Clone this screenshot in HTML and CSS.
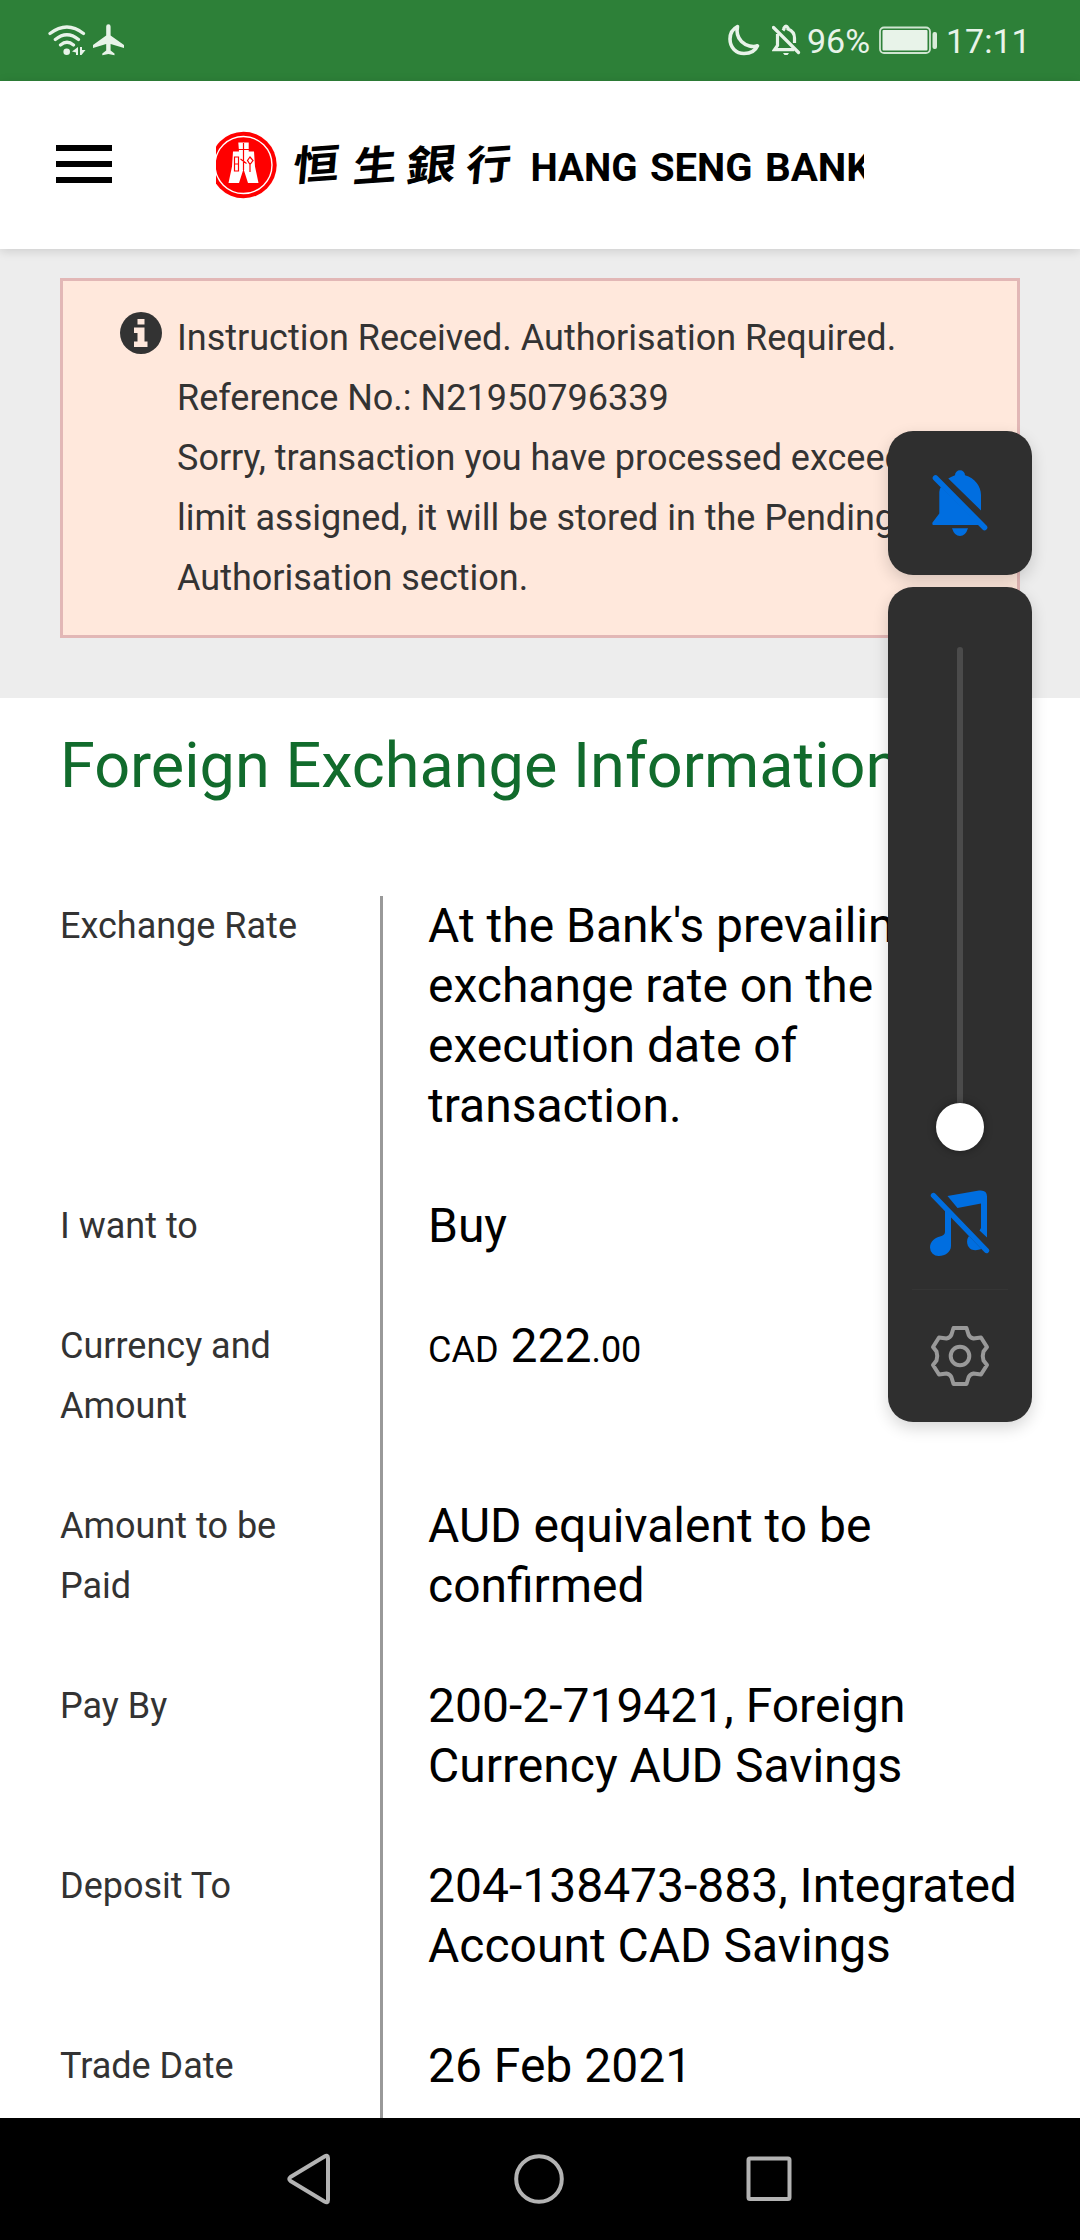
FILE: index.html
```
<!DOCTYPE html>
<html lang="en">
<head>
<meta charset="utf-8">
<title>Foreign Exchange Information</title>
<link rel="stylesheet" href="styles.css">
</head>
<body>
<div class="screen">
  <div class="status-bar">
    <div class="status-left">
      <svg width="38" height="32" viewBox="48 24 38 32" fill="none" stroke="#e8f3e9" stroke-linecap="round">
        <path d="M50 33.500Q67 20.500 83.500 33.500M55.300 39.500Q67 30 78.500 39.500M60.500 45Q67 39.500 73.500 45" stroke-width="3.200"/>
        <circle cx="66.700" cy="51.700" r="3.300" fill="#e8f3e9" stroke="none"/>
        <path d="M72 51.500L78 47V55H76V52.500ZM80 47V55L81.500 55L85.500 50H82V47Z" fill="#e8f3e9" stroke="none"/>
      </svg>
      <svg class="plane" width="32" height="32" viewBox="93 24 32 32" fill="#e8f3e9">
        <path d="M106.200 26.500a2.200 2.200 0 0 1 4.400 0V35.500L124 45V48L110.600 44V50.500L114.500 53.500V55.300L108.400 54L102.300 55.300V53.500L106.200 50.500V44L93 48V45L106.200 35.500Z"/>
      </svg>
    </div>
    <div class="status-right">
      <svg width="32" height="32" viewBox="728 24 32 32" fill="none" stroke="#e8f3e9" stroke-width="3.600" stroke-linejoin="round">
        <path d="M737.500 26.500C732.500 29 730 33.500 730 39C730 47.500 736 53.500 744 53.500C750.500 53.500 755.500 50.500 757.500 45.800C753 47.500 746 46 741.500 41.500C737.500 37.500 736.500 31.500 737.500 26.500Z"/>
      </svg>
      <svg class="mini-bell" width="29" height="32" viewBox="772 24 29 32" fill="none" stroke="#e8f3e9" stroke-width="3.200">
        <path d="M773.500 27.500L798.500 52.500" stroke-linecap="round"/>
        <path d="M777.500 34V45.500L774.500 49.700H794M783 30.500L784 29V28Q786 24 788 28V29Q794.500 31.500 794.500 38V43"/>
        <path d="M783 53H789L787.500 55H784.500Z" fill="#e8f3e9" stroke="none"/>
      </svg>
      <span class="percent">96%</span>
      <svg class="battery" width="58" height="28" viewBox="879 26 58 28" fill="none">
        <rect x="880" y="27.500" width="50" height="25.500" rx="4" stroke="#cfe5d1" stroke-width="1.800"/>
        <rect x="882.500" y="30" width="45" height="20.500" rx="1" fill="#e8f3e9"/>
        <rect x="932.500" y="32" width="4.500" height="17" rx="2" fill="#d9ebda"/>
      </svg>
      <span class="clock">17:11</span>
    </div>
  </div>

  <header class="app-header">
    <div class="menu"><i></i><i></i><i></i></div>
    <svg class="logo" width="648" height="88" viewBox="216 121 648 88">
      <circle cx="243.500" cy="165" r="33.200" fill="#f00"/>
      <circle cx="243.500" cy="165" r="28.500" fill="none" stroke="#fff" stroke-width="1.400"/>
      <path d="M238.300 142.500H248.700V151.500H254L255 166.500L258.500 183H248L243.500 169L239 183H228.500L232 166.500L233 151.500H239Z" fill="#fff"/>
      <path d="M238 149.500H249M243.500 143V170M240.500 159L246.500 163.500M234.500 157H238.500V171H234.500ZM234.500 164H238.500M250 157L253 160.500L250 164.500L247.500 160.500ZM250 164V172" fill="none" stroke="#f00" stroke-width="1.200"/>
      <g class="logo-cjk">
        <text transform="translate(292 181) skewY(-4) skewX(-5) scale(1.05 .93)">恒</text>
        <text transform="translate(352 182) skewY(-4) skewX(-5) scale(1 .93)">生</text>
        <text transform="translate(405 182) skewY(-4) skewX(-5) scale(1.13 .95)">銀</text>
        <text transform="translate(465 181) skewY(-4) skewX(-5) scale(1.03 .93)">行</text>
      </g>
      <g class="logo-latin">
        <text x="530.500" y="181" textLength="107" lengthAdjust="spacingAndGlyphs">HANG</text>
        <text x="650" y="181" textLength="102.500" lengthAdjust="spacingAndGlyphs">SENG</text>
        <text x="765" y="181" textLength="107" lengthAdjust="spacingAndGlyphs">BANK</text>
      </g>
    </svg>
  </header>

  <main class="content">
    <section class="notice-area">
      <div class="notice">
        <svg class="info" width="42" height="42" viewBox="0 0 42 42">
          <circle cx="21" cy="21" r="21" fill="#333"/>
          <path d="M17.500 7H24.500V12.500H17.500ZM14 15.500H24.500V29.500H27.500V35H14V29.500H17.500V21H14Z" fill="#ffe8dc"/>
        </svg>
        <p>Instruction Received. Authorisation Required.<br>Reference No.: N21950796339<br>Sorry, transaction you have processed exceeded<br>limit assigned, it will be stored in the Pending<br>Authorisation section.</p>
      </div>
    </section>
    <h1>Foreign Exchange Information</h1>
    <dl class="details">
      <dt>Exchange Rate</dt><dd>At the Bank's prevailing<br>exchange rate on the<br>execution date of<br>transaction.</dd>
      <dt>I want to</dt><dd>Buy</dd>
      <dt>Currency and<br>Amount</dt><dd><small>CAD</small> 222<small>.00</small></dd>
      <dt>Amount to be<br>Paid</dt><dd>AUD equivalent to be<br>confirmed</dd>
      <dt>Pay By</dt><dd>200-2-719421, Foreign<br>Currency AUD Savings</dd>
      <dt>Deposit To</dt><dd>204-138473-883, Integrated<br>Account CAD Savings</dd>
      <dt>Trade Date</dt><dd>26 Feb 2021</dd>
    </dl>
  </main>

  <nav class="nav-bar">
    <svg width="46" height="54" viewBox="286 2152 46 54"><path d="M324.500 2156.500Q328 2154.500 328 2158V2200Q328 2203.500 324.500 2201.500L290.500 2181Q288 2179 290.500 2177Z"/></svg>
    <svg width="50" height="54" viewBox="515 2152 50 54"><circle cx="540" cy="2179" r="22.800"/></svg>
    <svg width="48" height="54" viewBox="745 2152 48 54"><rect x="748.500" y="2158.500" width="41" height="40.500" rx="1.500"/></svg>
  </nav>

  <aside class="volume">
    <div class="panel ringer">
      <svg width="58" height="68" viewBox="931 469 58 68" fill="#006ee0">
        <path d="M948.300 478.500Q951.500 476.500 955 475.200A5 5 0 0 1 965 475.200C975 478 981 486.500 981 495V510.500Z"/>
        <path d="M941 487L979 525H933Q932 524.500 932.500 522.500L939.300 513.500V492Q939.300 489 941 487Z"/>
        <path d="M935.500 478L984.500 527.500" stroke="#006ee0" stroke-width="5.600" stroke-linecap="round"/>
        <path d="M952 528.200H968Q965.500 536 960 536T952 528.200Z"/>
      </svg>
    </div>
    <div class="panel slider">
      <div class="track"></div>
      <div class="thumb"></div>
      <svg class="music" width="60" height="68" viewBox="930 1189 60 68" fill="#006ee0">
        <path d="M947.500 1196L979 1190.500Q987 1189.500 987 1196.500V1237.500L979.500 1230.500L981 1228V1203.500L957.500 1208Z"/>
        <path d="M945 1208L951 1214V1246C951 1252 945 1256 939 1256A8.500 8.500 0 0 1 930 1247.500C930 1241 935.500 1237.500 940 1236.500Q945 1235 945 1232Z"/>
        <path d="M969 1236C965.500 1240 967 1247.500 971.500 1249.500Q976 1251 981.500 1249Z"/>
        <path d="M933.500 1195.500L986.500 1250.500" stroke="#006ee0" stroke-width="5.400" stroke-linecap="round"/>
      </svg>
      <div class="divider"></div>
      <svg width="60" height="62" viewBox="-30 -31 60 62" fill="none" stroke="#999" stroke-width="4" stroke-linejoin="round">
        <path d="M-6.500 -28H6.500L8.500 -21.500Q9.500 -18.500 13.500 -17.500L21 -18.500L27 -9L23.500 -4.500Q22 0 23.500 4.500L27 9L21 18.500L13.500 17.500Q9.500 18.500 8.500 21.500L6.500 28H-6.500L-8.500 21.500Q-9.500 18.500 -13.500 17.500L-21 18.500L-27 9L-23.500 4.500Q-22 0 -23.500 -4.500L-27 -9L-21 -18.500L-13.500 -17.500Q-9.500 -18.500 -8.500 -21.500Z"/>
        <circle r="9.300"/>
      </svg>
    </div>
  </aside>
</div>
</body>
</html>
```
FILE: styles.css
```
* { box-sizing: border-box; }
body { margin: 0; font-family: Roboto, "Noto Sans", sans-serif; background: #fff; }
svg { display: block; flex: none; }
.screen { position: relative; width: 1080px; height: 2240px; display: flex; flex-direction: column; overflow: hidden; }

.status-bar { height: 81px; flex: none; background: #2d8038; color: #e8f3e9; display: flex; justify-content: space-between; padding: 24px 50px 25px 48px; align-items: flex-start; font-size: 34px; line-height: 32px; }
.status-left, .status-right { display: flex; }
.plane { margin-left: 7px; }
.mini-bell { margin-left: 12px; }
.percent { width: 64px; margin: 1px 0 0 6px; }
.battery { margin: 2px 0 0 8px; }
.clock { width: 84px; margin: 1px 0 0 9px; }

.app-header { position: relative; z-index: 1; height: 168px; flex: none; background: #fff; display: flex; align-items: flex-start; padding: 40px 56px; gap: 104px; box-shadow: 0 2px 10px rgba(0, 0, 0, .14); }
.menu { width: 56px; padding-top: 24px; display: flex; flex-direction: column; gap: 10px; }
.menu i { height: 6px; background: #000; }
.logo { overflow: hidden; }
.logo-cjk { font: 700 44px "Noto Sans CJK TC", sans-serif; }
.logo-latin { font: 700 39px Roboto, sans-serif; }

.content { flex: 1; min-height: 0; overflow: hidden; }
.notice-area { height: 449px; background: #ededed; padding: 29px 60px 60px; }
.notice { height: 360px; border: 3px solid #e2b7b6; background: #ffe8dc; display: flex; gap: 15px; padding: 27px 0 27px 57px; color: #333; font-size: 36px; line-height: 60px; }
.notice p { margin: 0; white-space: nowrap; }
.info { margin-top: 4px; }
h1 { margin: 0; padding: 23px 60px 85px; font-size: 63px; line-height: 90px; font-weight: 400; color: #116b2c; white-space: nowrap; }
.details { margin: 0 0 0 60px; display: grid; grid-template-columns: 320px 1fr; line-height: 60px; }
dt { font-size: 36px; color: #333; padding-bottom: 60px; }
dd { margin: 0; border-left: 3px solid #999; padding: 0 0 60px 45px; font-size: 48px; color: #000; white-space: nowrap; }
dd small { font-size: 36px; line-height: 1; }

.nav-bar { height: 122px; flex: none; background: #000; display: flex; justify-content: space-between; padding: 34px 287px 0 286px; }
.nav-bar svg { fill: none; stroke: #b3b3b3; stroke-width: 4; stroke-linejoin: round; }

.volume { position: absolute; z-index: 2; left: 888px; top: 431px; width: 144px; display: flex; flex-direction: column; gap: 12px; }
.panel { background: #2f2f2f; border-radius: 25px; box-shadow: 0 6px 16px rgba(0, 0, 0, .16); display: flex; flex-direction: column; align-items: center; }
.ringer { height: 144px; padding-top: 38px; }
.slider { height: 835px; padding-top: 60px; }
.track { width: 6px; height: 480px; border-radius: 3px; background: #4b4b4b; }
.thumb { width: 48px; height: 48px; margin-top: -24px; flex: none; border-radius: 50%; background: #fff; box-shadow: 0 0 8px rgba(0, 0, 0, .4); }
.music { margin-top: 38px; }
.divider { width: 96px; height: 1px; background: #353535; margin: 32px 0 35px; }
```
